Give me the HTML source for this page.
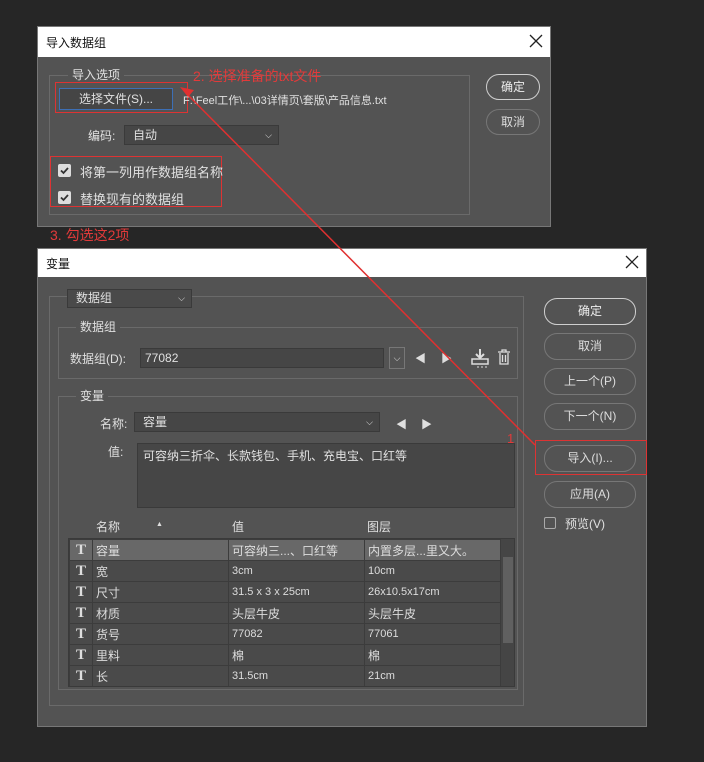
<!DOCTYPE html>
<html><head><meta charset="utf-8"><style>
*{box-sizing:border-box;margin:0;padding:0}
body{width:704px;height:762px;background:#262626;position:relative;overflow:hidden;font-family:"Liberation Sans","Noto Sans CJK SC",sans-serif;font-size:12px;color:#e0e0e0}
.a{position:absolute}
.dlg{background:#535353;border:1px solid #777}
.title{background:#fff;color:#111;font-size:12px}
.grp{border:1px solid #6a6a6a}
.lbl{background:#535353;padding:0 4px}
.btn{border:1px solid #cfcfcf;border-radius:13px;text-align:center;color:#eee;font-size:12px}
.btn2{border:1px solid #777;border-radius:13px;text-align:center;color:#ddd;font-size:12px}
.sel{background:#464646;border:1px solid #3a3a3a;padding-left:8px}
.red{color:#e23a3a}
.rbox{border:1px solid #d33}
table{border-collapse:collapse}
td{border:1px solid #3c3c3c;height:21px;font-size:11px;padding-left:3px;background:#4a4a4a;color:#ddd;white-space:nowrap}
td.t{width:23px;text-align:center;font-family:"Liberation Serif",serif;font-size:15px;font-weight:bold;padding:0;color:#ddd}
tr.s td{background:#686868}
</style></head><body>

<div class="a dlg" style="left:37px;top:26px;width:514px;height:201px"></div>
<div class="a title" style="left:38px;top:27px;width:512px;height:30px;padding:7px 0 0 8px">导入数据组</div>
<svg class="a" style="left:529px;top:34px" width="14" height="14"><path d="M1 1L13 13M13 1L1 13" stroke="#222" stroke-width="1.3"/></svg>
<div class="a grp" style="left:49px;top:75px;width:421px;height:140px"></div>
<div class="a lbl" style="left:68px;top:66px">导入选项</div>
<div class="a red" style="left:193px;top:66px;font-size:14px">2. 选择准备的txt文件</div>
<div class="a rbox" style="left:55px;top:82px;width:133px;height:31px"></div>
<div class="a" style="left:59px;top:88px;width:114px;height:22px;background:#454545;border:1px solid #3d6fb5;text-align:center;line-height:20px">选择文件(S)...</div>
<div class="a" style="left:183px;top:92px;font-size:11px">F:\Feel工作\...\03详情页\套版\产品信息.txt</div>
<div class="a btn" style="left:486px;top:74px;width:54px;height:26px;line-height:24px">确定</div>
<div class="a btn2" style="left:486px;top:109px;width:54px;height:26px;line-height:24px">取消</div>
<div class="a" style="left:88px;top:127px">编码:</div>
<div class="a sel" style="left:124px;top:125px;width:155px;height:20px;line-height:18px">自动<span style="position:absolute;right:6px;font-size:9px">⌵</span></div>
<div class="a rbox" style="left:50px;top:156px;width:172px;height:51px"></div>
<svg class="a" style="left:58px;top:164px" width="13" height="13"><rect width="13" height="13" rx="2" fill="#ddd"/><path d="M3 6.5l2.5 2.5L10 4" stroke="#333" stroke-width="1.8" fill="none"/></svg>
<div class="a" style="left:80px;top:162px;font-size:13px">将第一列用作数据组名称</div>
<svg class="a" style="left:58px;top:191px" width="13" height="13"><rect width="13" height="13" rx="2" fill="#ddd"/><path d="M3 6.5l2.5 2.5L10 4" stroke="#333" stroke-width="1.8" fill="none"/></svg>
<div class="a" style="left:80px;top:189px;font-size:13px">替换现有的数据组</div>
<div class="a red" style="left:50px;top:225px;font-size:14px">3. 勾选这2项</div>

<div class="a dlg" style="left:37px;top:248px;width:610px;height:479px"></div>
<div class="a title" style="left:38px;top:249px;width:608px;height:28px;padding:6px 0 0 8px">变量</div>
<svg class="a" style="left:625px;top:255px" width="14" height="14"><path d="M1 1L13 13M13 1L1 13" stroke="#222" stroke-width="1.3"/></svg>
<div class="a grp" style="left:49px;top:296px;width:475px;height:410px"></div>
<div class="a sel" style="left:67px;top:289px;width:125px;height:19px;line-height:17px;background:#4a4a4a">数据组<span style="position:absolute;right:6px;font-size:9px">⌵</span></div>
<div class="a grp" style="left:58px;top:327px;width:460px;height:52px"></div>
<div class="a lbl" style="left:76px;top:318px">数据组</div>
<div class="a" style="left:70px;top:350px">数据组(D):</div>
<div class="a sel" style="left:140px;top:348px;width:244px;height:20px;line-height:18px;padding-left:4px">77082</div>
<div class="a" style="left:389px;top:347px;width:16px;height:22px;border:1px solid #777;font-size:9px;text-align:center;line-height:20px">⌵</div>
<div class="a" style="left:415px;top:350px;font-size:11px;color:#ddd">◀</div>
<div class="a" style="left:441px;top:350px;font-size:11px;color:#ddd">▶</div>
<svg class="a" style="left:470px;top:347px" width="20" height="22"><path d="M10 2v8M6 7l4 4 4-4" stroke="#ddd" stroke-width="2" fill="none"/><rect x="2" y="12" width="16" height="5" fill="none" stroke="#ddd" stroke-width="1.5"/><path d="M7 20h2M11 20h2M15 20h2" stroke="#ddd"/></svg>
<svg class="a" style="left:497px;top:349px" width="14" height="16"><path d="M1 3h12M5 3V1h4v2M3 4v11h8V4M5.5 6v7M8.5 6v7" stroke="#ddd" stroke-width="1.3" fill="none"/></svg>
<div class="a grp" style="left:58px;top:396px;width:460px;height:294px"></div>
<div class="a lbl" style="left:76px;top:387px">变量</div>
<div class="a" style="left:100px;top:415px">名称:</div>
<div class="a sel" style="left:134px;top:412px;width:246px;height:20px;line-height:18px">容量<span style="position:absolute;right:6px;font-size:9px">⌵</span></div>
<div class="a" style="left:396px;top:416px;font-size:11px">◀</div>
<div class="a" style="left:421px;top:416px;font-size:11px">▶</div>
<div class="a" style="left:108px;top:443px">值:</div>
<div class="a" style="left:137px;top:443px;width:378px;height:65px;background:#464646;border:1px solid #3a3a3a;padding:3px 5px">可容纳三折伞、长款钱包、手机、充电宝、口红等</div>
<div class="a" style="left:96px;top:518px">名称</div>
<div class="a" style="left:156px;top:521px;font-size:7px">▲</div>
<div class="a" style="left:232px;top:518px">值</div>
<div class="a" style="left:367px;top:518px">图层</div>
<div class="a" style="left:68px;top:538px;width:447px;height:149px;background:#3c3c3c;border:1px solid #3a3a3a;overflow:hidden">
<table style="width:432px">
<tr class="s"><td class="t">T</td><td style="width:136px;font-size:12px">容量</td><td style="width:136px;font-size:12px">可容纳三...、口红等</td><td style="font-size:12px">内置多层...里又大。</td></tr>
<tr><td class="t">T</td><td style="font-size:12px">宽</td><td>3cm</td><td>10cm</td></tr>
<tr><td class="t">T</td><td style="font-size:12px">尺寸</td><td>31.5 x 3 x 25cm</td><td>26x10.5x17cm</td></tr>
<tr><td class="t">T</td><td style="font-size:12px">材质</td><td style="font-size:12px">头层牛皮</td><td style="font-size:12px">头层牛皮</td></tr>
<tr><td class="t">T</td><td style="font-size:12px">货号</td><td>77082</td><td>77061</td></tr>
<tr><td class="t">T</td><td style="font-size:12px">里料</td><td style="font-size:12px">棉</td><td style="font-size:12px">棉</td></tr>
<tr><td class="t">T</td><td style="font-size:12px">长</td><td>31.5cm</td><td>21cm</td></tr>
</table>
<div class="a" style="left:432px;top:0;width:14px;height:149px;background:#454545"></div>
<div class="a" style="left:434px;top:18px;width:10px;height:86px;background:#606060"></div>
</div>
<div class="a btn" style="left:544px;top:298px;width:92px;height:27px;line-height:25px">确定</div>
<div class="a btn2" style="left:544px;top:333px;width:92px;height:27px;line-height:25px">取消</div>
<div class="a btn2" style="left:544px;top:368px;width:92px;height:27px;line-height:25px">上一个(P)</div>
<div class="a btn2" style="left:544px;top:403px;width:92px;height:27px;line-height:25px">下一个(N)</div>
<div class="a rbox" style="left:535px;top:440px;width:112px;height:35px"></div>
<div class="a btn2" style="left:544px;top:445px;width:92px;height:27px;line-height:25px">导入(I)...</div>
<div class="a btn2" style="left:544px;top:481px;width:92px;height:27px;line-height:25px">应用(A)</div>
<div class="a" style="left:544px;top:517px;width:12px;height:12px;border:1px solid #aaa;border-radius:2px"></div>
<div class="a" style="left:565px;top:515px">预览(V)</div>
<div class="a red" style="left:507px;top:431px;font-size:13px">1</div>

<svg class="a" style="left:0;top:0" width="704" height="762"><line x1="535" y1="445" x2="186" y2="93" stroke="#e03030" stroke-width="1.5"/><path d="M180 87l14 3-6 7z" fill="#e03030"/></svg>
</body></html>
